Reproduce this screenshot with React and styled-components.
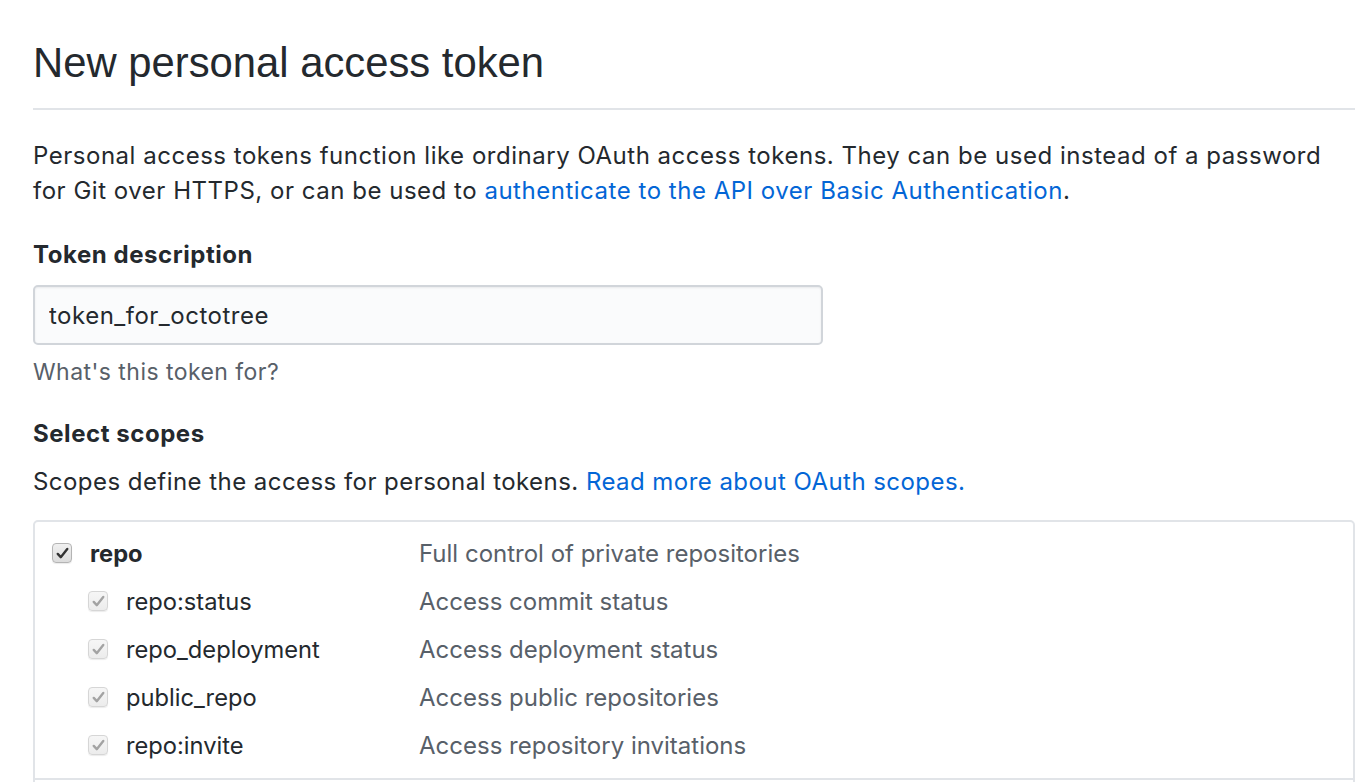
import React from "react";
import styled, { createGlobalStyle } from "styled-components";

const GlobalStyle = createGlobalStyle`
  html, body {
    margin: 0;
    padding: 0;
    background: #fff;
  }
  body {
    font-family: Inter, "Liberation Sans", sans-serif;
    color: #24292e;
    -webkit-font-smoothing: antialiased;
  }
`;

const Page = styled.div`
  width: 1322px;
  padding: 37px 0 0 33px;
`;

const Header = styled.div`
  border-bottom: 2px solid #e1e4e8;
  padding-bottom: 19px;
`;

const Title = styled.h1`
  margin: 0;
  font-family: "Liberation Sans", Arial, sans-serif;
  font-size: 41.8px;
  font-weight: 400;
  line-height: 52px;
  color: #24292e;
`;

const Lead = styled.p`
  margin: 28px 0 0;
  font-size: 24px;
  letter-spacing: 0.52px;
  line-height: 35px;
`;

const Link = styled.a`
  color: #0366d6;
  text-decoration: none;
`;

const Label = styled.div`
  margin-top: ${(p) => p.$top || 0}px;
  font-size: 24px;
  letter-spacing: 0.55px;
  font-weight: 700;
  line-height: 35px;
`;

const Input = styled.input`
  display: block;
  box-sizing: border-box;
  width: 790px;
  height: 60px;
  margin-top: 13px;
  padding: 0 14px;
  font-family: Inter, "Liberation Sans", sans-serif;
  font-size: 24px;
  letter-spacing: 0.5px;
  color: #24292e;
  background: #fafbfc;
  border: 2px solid #d1d5da;
  border-radius: 5px;
  box-shadow: inset 0 1px 2px rgba(27, 31, 35, 0.075);
  outline: none;
`;

const Note = styled.div`
  margin-top: 10px;
  font-size: 23px;
  letter-spacing: 0.45px;
  line-height: 35px;
  color: #586069;
`;

const Text = styled.div`
  margin-top: 13px;
  font-size: 24px;
  letter-spacing: 0.45px;
  line-height: 35px;
`;

const ScopeBox = styled.div`
  margin-top: 21px;
  border: 2px solid #e1e4e8;
  border-radius: 5px;
  overflow: hidden;
`;

const ScopeGroup = styled.div`
  padding: 7px 0 9px 17px;
  border-bottom: 2px solid #e1e4e8;
`;

const Row = styled.label`
  display: grid;
  grid-template-columns: 367px 1fr;
  align-items: center;
  height: 48px;
  font-size: 23.7px;
`;

const Name = styled.span`
  display: flex;
  align-items: center;
  gap: 18px;
  padding-left: ${(p) => (p.$child ? 36 : 0)}px;
  font-weight: ${(p) => (p.$child ? 400 : 700)};
  color: #24292e;
`;

const Desc = styled.span`
  font-size: 24px;
  color: #586069;
`;

const Box = styled.span`
  display: inline-flex;
  align-items: center;
  justify-content: center;
  box-sizing: border-box;
  width: 20px;
  height: 20px;
  border-radius: 4px;
  border: 1px solid ${(p) => (p.$disabled ? "#d6d6d6" : "#b4b4b4")};
  background: ${(p) =>
    p.$disabled
      ? "linear-gradient(#f6f6f6, #ececec)"
      : "linear-gradient(#f0f0f0, #dcdcdc)"};
  box-shadow: 0 1px 1px rgba(0, 0, 0, 0.08);

  svg {
    width: 13px;
    height: 13px;
  }
`;

function Check({ disabled }) {
  return (
    <Box $disabled={disabled}>
      <svg viewBox="0 0 12 12">
        <path
          d="M1.6 6.4 L4.4 9.4 L10.4 1.8"
          fill="none"
          stroke={disabled ? "#a3a3a3" : "#333"}
          strokeWidth="2.2"
          strokeLinecap="round"
          strokeLinejoin="round"
        />
      </svg>
    </Box>
  );
}

const repoScopes = [
  ["repo:status", "Access commit status"],
  ["repo_deployment", "Access deployment status"],
  ["public_repo", "Access public repositories"],
  ["repo:invite", "Access repository invitations"],
];

export default function App() {
  return (
    <>
      <GlobalStyle />
      <Page>
        <Header>
          <Title>New personal access token</Title>
        </Header>
        <Lead>
          Personal access tokens function like ordinary OAuth access tokens.
          They can be used instead of a password for Git over HTTPS, or can be
          used to{" "}
          <Link href="#">authenticate to the API over Basic Authentication</Link>.
        </Lead>

        <Label $top={29}>Token description</Label>
        <Input defaultValue="token_for_octotree" />
        <Note>What's this token for?</Note>

        <Label $top={26}>Select scopes</Label>
        <Text>
          Scopes define the access for personal tokens.{" "}
          <Link href="#">Read more about OAuth scopes.</Link>
        </Text>

        <ScopeBox>
          <ScopeGroup>
            <Row>
              <Name>
                <Check />
                repo
              </Name>
              <Desc>Full control of private repositories</Desc>
            </Row>
            {repoScopes.map(([name, desc]) => (
              <Row key={name}>
                <Name $child>
                  <Check disabled />
                  {name}
                </Name>
                <Desc>{desc}</Desc>
              </Row>
            ))}
          </ScopeGroup>
          <ScopeGroup>
            <Row>
              <Name>
                <Check />
                admin:org
              </Name>
              <Desc>Full control of orgs and teams</Desc>
            </Row>
          </ScopeGroup>
        </ScopeBox>
      </Page>
    </>
  );
}
